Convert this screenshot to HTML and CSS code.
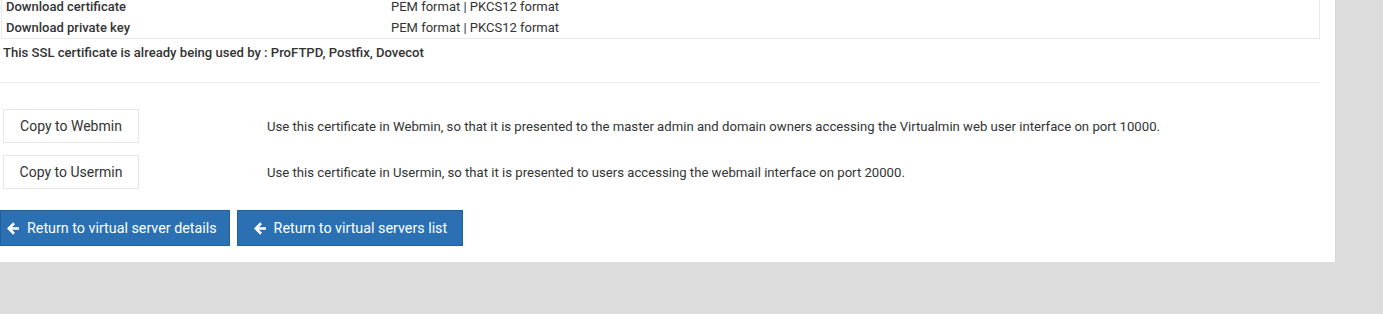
FILE: index.html
```html
<!DOCTYPE html>
<html lang="en">
<head>
    <meta charset="UTF-8">
    <title>SSL Certificate</title>
    <link rel="stylesheet" href="styles.css">
</head>
<body>
    <div class="panel">
        <!-- download links table, top rows scrolled off -->
        <div class="cert-table">
            <div class="cert-row">
                <span class="label">Download certificate</span>
                <span class="value">PEM format | PKCS12 format</span>
            </div>
            <div class="cert-row">
                <span class="label">Download private key</span>
                <span class="value">PEM format | PKCS12 format</span>
            </div>
        </div>
        <p class="used-by">This SSL certificate is already being used by : ProFTPD, Postfix, Dovecot</p>
        <hr class="sep">

        <div class="copy-list">
            <div class="copy-row">
                <button class="btn-copy">Copy to Webmin</button>
                <span class="copy-desc">Use this certificate in Webmin, so that it is presented to the master admin and domain owners accessing the Virtualmin web user interface on port 10000.</span>
            </div>
            <div class="copy-row">
                <button class="btn-copy">Copy to Usermin</button>
                <span class="copy-desc">Use this certificate in Usermin, so that it is presented to users accessing the webmail interface on port 20000.</span>
            </div>
        </div>

        <div class="return-bar">
            <button class="btn-return">
                <svg class="arrow" viewBox="0 0 12 12"><path d="M6.5 1.2 1.6 6l4.9 4.8M1.8 6H11" fill="none" stroke="#fff" stroke-width="2.4"/></svg>
                Return to virtual server details
            </button>
            <button class="btn-return">
                <svg class="arrow" viewBox="0 0 12 12"><path d="M6.5 1.2 1.6 6l4.9 4.8M1.8 6H11" fill="none" stroke="#fff" stroke-width="2.4"/></svg>
                Return to virtual servers list
            </button>
        </div>
    </div>
</body>
</html>
```

FILE: styles.css
```css
body {
    margin: 0;
    background-color: #dcdcdc;
    font-family: Roboto, "Liberation Sans", sans-serif;
    color: #333;
}
.panel {
    width: 1320px;
    padding: 0 15px 16px 0;
    background-color: #fff;
    box-shadow: 0 1px 2px rgba(0, 0, 0, 0.08);
}
.cert-table {
    margin-top: -4px;
    margin-left: 1px;
    width: 1317px;
    border: 1px solid #e9e9e9;
    border-top: none;
}
.cert-row {
    display: grid;
    grid-template-columns: 384px 1fr;
    height: 21px;
    align-items: center;
    font-size: 13px;
}
.cert-row .label {
    padding-left: 4px;
    font-weight: 500;
}
.cert-row .value {
    padding-left: 5px;
}
.used-by {
    margin: 6px 0 0 3px;
    font-size: 13.1px;
    font-weight: 500;
    line-height: 16px;
}
.sep {
    margin: 21px 0 0 0;
    border: none;
    border-top: 1px solid #ececec;
}
.copy-list {
    display: flex;
    flex-direction: column;
    gap: 12px;
    margin-top: 26px;
    padding-left: 3px;
}
.copy-row {
    display: flex;
    align-items: center;
}
.btn-copy {
    width: 136px;
    height: 34px;
    padding: 0;
    background: #fff;
    border: 1px solid #e6e6e6;
    font-family: inherit;
    font-size: 14px;
    color: #333;
}
.copy-desc {
    margin-left: 128px;
    font-size: 13.15px;
}
.return-bar {
    display: flex;
    gap: 7px;
    margin-top: 21px;
}
.btn-return {
    display: flex;
    align-items: center;
    gap: 7px;
    height: 36px;
    padding: 0 12px 0 6px;
    background-color: #2a70b3;
    border: 1px solid #23609b;
    color: #fff;
    font-family: inherit;
    font-size: 14.3px;
}
.btn-return + .btn-return {
    padding: 0 15px 0 16px;
}
.arrow {
    width: 13px;
    height: 13px;
}
```
